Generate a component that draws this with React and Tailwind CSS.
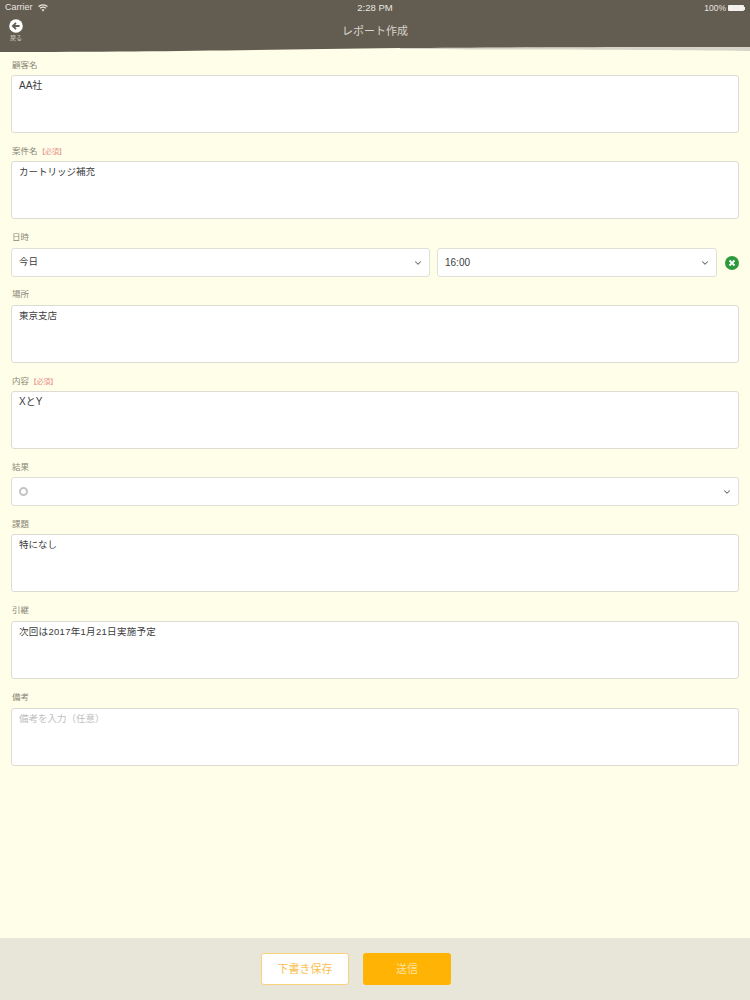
import { ChevronDown } from "lucide-react";

const jp = "font-['Liberation_Sans','Noto_Sans_CJK_JP',sans-serif]";

function Label({ children, required }) {
  return (
    <div className="h-[20px] pl-[12px] text-[8.5px] leading-[20px] text-[#8a8778]">
      {children}
      {required && <span className="ml-[4px] text-[7px] text-[#e8908a] [font-feature-settings:'palt']">【必須】</span>}
    </div>
  );
}

function TextBox({ value, placeholder, className = "text-[9.5px]" }) {
  return (
    <div className={`h-[58px] rounded-[3px] border border-[#dcdcd4] bg-white px-[7px] py-[2px] leading-[16px] ${value ? "text-[#3c3c3c]" : "text-[#c0c0c0]"} ${className}`}>
      {value || placeholder}
    </div>
  );
}

function SelectBox({ children, className }) {
  return (
    <div className={`flex h-[29px] items-center justify-between rounded-[3px] border border-[#e0e0d8] bg-white pl-[7px] pr-[6px] text-[#3c3c3c] ${className}`}>
      <span>{children}</span>
      <ChevronDown size={10} strokeWidth={2.5} className="text-[#666666]" />
    </div>
  );
}

export default function App() {
  return (
    <div className={`flex h-[1000px] w-[750px] flex-col overflow-hidden bg-[#fffee9] ${jp}`}>
      <header className="relative h-[54px] shrink-0">
        <svg className="absolute inset-0" width="750" height="54" viewBox="0 0 750 54">
          <path d="M400 48 C550 47 650 47 750 47 L750 51 C650 50 550 50 400 49 Z" fill="#d6d3c8" />
          <path d="M0 52 C150 52 250 50 400 48 C550 47 650 47 750 47 L750 0 L0 0 Z" fill="#635c50" />
        </svg>
        <div className="relative flex h-[16px] items-center justify-between px-[5px] text-[9px] text-[#e8e6e0]">
          <div className="flex flex-1 items-center gap-[5px]">
            <span>Carrier</span>
            <svg width="10" height="8" viewBox="0 0 10 8" fill="none" stroke="#e8e6e0" strokeWidth="1.200">
              <path d="M0.500 2.500 C3 0.300 7 0.300 9.500 2.500" />
              <path d="M2 4.200 C3.800 2.800 6.200 2.800 8 4.200" />
              <path d="M5 7.500 L3.500 5.700 C4.400 5.100 5.600 5.100 6.500 5.700 Z" fill="#e8e6e0" stroke="none" />
            </svg>
          </div>
          <span className="text-[9.5px]">2:28 PM</span>
          <div className="flex flex-1 items-center justify-end">
            <span className="mr-[2px] text-[8.5px]">100%</span>
            <div className="h-[6px] w-[16px] rounded-[1px] bg-[#f2f1ec]" />
            <div className="h-[3px] w-[1px] bg-[#f2f1ec]" />
          </div>
        </div>
        <div className="relative flex">
          <div className="flex w-[32px] flex-col items-center pt-[3px]">
            <svg width="14" height="14" viewBox="0 0 14 14">
              <circle cx="7" cy="7" r="6.800" fill="#ffffff" />
              <path d="M10.500 7 H4 M7 3.800 L3.800 7 L7 10.200" fill="none" stroke="#635c50" strokeWidth="1.800" />
            </svg>
            <span className="mt-[1px] text-[6px] leading-[8px] text-[#cfccc3]">戻る</span>
          </div>
          <div className="flex-1 pr-[32px] pt-[6px] text-center text-[11px] leading-[18px] text-[#d8d5cc]">レポート作成</div>
        </div>
      </header>

      <main className="flex-1 pr-[11px]">
        <div className="pt-[1px]">
          <Label>顧客名</Label>
          <div className="pl-[11px]"><TextBox value="AA社" className="text-[10px]" /></div>
        </div>
        <div className="pt-[8px]">
          <Label required>案件名</Label>
          <div className="pl-[11px]"><TextBox value="カートリッジ補充" /></div>
        </div>
        <div className="pt-[8px]">
          <Label>日時</Label>
          <div className="flex items-center pl-[11px] pt-[1px]">
            <SelectBox className="w-[419px] text-[9.5px]">今日</SelectBox>
            <SelectBox className="ml-[7px] w-[280px] text-[10px]">16:00</SelectBox>
            <div className="ml-[8px] flex h-[14px] w-[14px] items-center justify-center rounded-full bg-[#2e9a3e]">
              <svg width="8" height="8" viewBox="0 0 8 8" stroke="#ffffff" strokeWidth="1.800">
                <path d="M1.500 1.500 L6.500 6.500 M6.500 1.500 L1.500 6.500" />
              </svg>
            </div>
          </div>
        </div>
        <div className="pt-[7px]">
          <Label>場所</Label>
          <div className="pl-[11px] pt-[1px]"><TextBox value="東京支店" /></div>
        </div>
        <div className="pt-[8px]">
          <Label required>内容</Label>
          <div className="pl-[11px]"><TextBox value="XとY" className="text-[10px]" /></div>
        </div>
        <div className="pt-[8px]">
          <Label>結果</Label>
          <div className="pl-[11px]">
            <SelectBox>
              <span className="block h-[9px] w-[9px] rounded-full border-2 border-[#c4c4c4]" />
            </SelectBox>
          </div>
        </div>
        <div className="pt-[8px]">
          <Label>課題</Label>
          <div className="pl-[11px]"><TextBox value="特になし" /></div>
        </div>
        <div className="pt-[8px]">
          <Label>引継</Label>
          <div className="pl-[11px] pt-[1px]"><TextBox value="次回は2017年1月21日実施予定" className="text-[9.5px] tracking-[0.3px]" /></div>
        </div>
        <div className="pt-[8px]">
          <Label>備考</Label>
          <div className="pl-[11px] pt-[1px]"><TextBox placeholder="備考を入力（任意）" /></div>
        </div>
      </main>

      <footer className="flex h-[62px] shrink-0 justify-center gap-[14px] bg-[#e8e6d9] pr-[38px] pt-[15px]">
        <button className="h-[32px] w-[88px] rounded-[3px] border border-[#fbd27c] bg-white text-[11px] text-[#f7c04d]">下書き保存</button>
        <button className="h-[32px] w-[88px] rounded-[3px] bg-[#ffb305] text-[11px] text-[#fde3a0]">送信</button>
      </footer>
    </div>
  );
}
